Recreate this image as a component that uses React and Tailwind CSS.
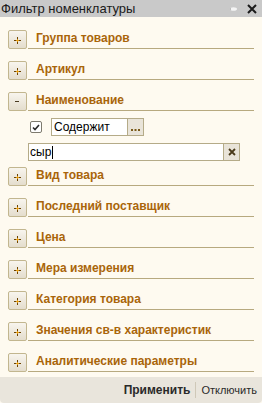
import React from "react";

function PlusIcon() {
  return (
    <svg width="7" height="7" viewBox="0 0 7 7">
      <rect x="0" y="3" width="7" height="1" fill="#6b4200" />
      <rect x="3" y="0" width="1" height="7" fill="#6b4200" />
      <rect x="2" y="3" width="3" height="1" fill="#e39a10" />
      <rect x="3" y="2" width="1" height="3" fill="#e39a10" />
    </svg>
  );
}

function MinusIcon() {
  return (
    <svg width="5" height="2" viewBox="0 0 5 2">
      <rect x="0" y="0" width="4" height="1" fill="#4a3a20" />
    </svg>
  );
}

function Row({ label, open }) {
  return (
    <div className="flex items-start h-[19px] pl-[8px] pr-[8px]">
      <div className="w-[19px] h-[19px] shrink-0 border border-[#c2b68f] rounded-[2px] bg-gradient-to-b from-[#f8f5ee] to-[#e4ddcd] flex items-center justify-center pt-[1px]">
        {open ? <MinusIcon /> : <PlusIcon />}
      </div>
      <div className="flex-1 ml-[1px] h-[19px] border-b border-[#b7a97f] pl-[8px] text-[12px] leading-[14px] font-bold text-[#a9650a] pt-[1px] whitespace-nowrap overflow-hidden">
        {label}
      </div>
    </div>
  );
}

export default function App() {
  const before = ["Группа товаров", "Артикул"];
  const after = [
    "Вид товара",
    "Последний поставщик",
    "Цена",
    "Мера измерения",
    "Категория товара",
    "Значения св-в характеристик",
    "Аналитические параметры",
  ];
  return (
    <div
      className="w-[262px] h-[403px] bg-[#fefaf0] flex flex-col overflow-hidden"
      style={{ fontFamily: '"Liberation Sans", Arial, sans-serif' }}
    >
      {/* Title bar */}
      <div className="h-[17px] bg-[#c9c9c9] flex items-center pl-[1px] pr-[5px] shrink-0">
        <div className="flex-1 text-[13px] leading-[15px] text-[#1a1a1a] whitespace-nowrap">
          Фильтр номенклатуры
        </div>
        <svg width="7" height="4" viewBox="0 0 7 4" className="mr-[10px] mt-[1px]">
          <ellipse cx="3.5" cy="2" rx="3.5" ry="1.8" fill="#f4f4f4" />
          <rect x="0" y="1" width="1" height="2" fill="#bdbdbd" />
        </svg>
        <svg width="10" height="10" viewBox="0 0 10 10">
          <path d="M1 1 L9 9 M9 1 L1 9" stroke="#1a1a1a" strokeWidth="2" />
        </svg>
      </div>

      {/* Body */}
      <div className="flex-1 flex flex-col pt-[13px] gap-[12px]">
        {before.map((l) => (
          <Row key={l} label={l} />
        ))}
        <Row label="Наименование" open />
        <div className="flex flex-col gap-[7px] -mt-[5px] -mb-[6px]">
          <div className="flex items-center h-[18px] pl-[30px]">
            <div className="w-[12px] h-[12px] border border-[#7d7a6e] rounded-[2px] bg-white flex items-center justify-center">
              <svg width="8" height="7" viewBox="0 0 8 7">
                <path d="M1 3.5 L3 5.5 L7 1" stroke="#2a2a2a" strokeWidth="1.6" fill="none" />
              </svg>
            </div>
            <div className="ml-[9px] flex h-[18px]">
              <div className="w-[77px] h-[18px] border border-[#b5ab88] bg-white text-[12px] leading-[16px] text-black pl-[2px]">
                Содержит
              </div>
              <div className="w-[16px] h-[18px] border border-l-0 border-[#b5ab88] bg-[#e9e4d9] flex items-end justify-center pb-[4px]">
                <svg width="9" height="2" viewBox="0 0 9 2">
                  <rect x="0" y="0" width="2" height="2" fill="#7a5a1a" />
                  <rect x="3.5" y="0" width="2" height="2" fill="#7a5a1a" />
                  <rect x="7" y="0" width="2" height="2" fill="#7a5a1a" />
                </svg>
              </div>
            </div>
          </div>
          <div className="flex h-[18px] pl-[28px]">
            <div className="w-[196px] h-[18px] border border-[#b5ab88] bg-white text-[12px] leading-[16px] text-black pl-[1px] flex items-center">
              <span>сыр</span>
              <span className="w-[1px] h-[13px] bg-black ml-[1px]" />
            </div>
            <div className="w-[16px] h-[18px] border border-l-0 border-[#b5ab88] bg-[#e9e4d9] flex items-center justify-center">
              <svg width="8" height="8" viewBox="0 0 8 8">
                <path d="M1 1 L7 7 M7 1 L1 7" stroke="#4a3a1a" strokeWidth="1.8" />
              </svg>
            </div>
          </div>
        </div>
        {after.map((l) => (
          <Row key={l} label={l} />
        ))}
      </div>

      {/* Footer */}
      <div className="h-[26px] shrink-0 bg-[#e9e5dc] rounded-b-[4px] flex items-center justify-end pr-[5px] leading-[14px]">
        <span className="text-[12px] font-bold text-[#2a2a2a]">Применить</span>
        <span className="w-[1px] h-[16px] bg-[#cfc8b8] mx-[5px]" />
        <span className="text-[11px] text-[#2a2a2a]">Отключить</span>
      </div>
    </div>
  );
}
